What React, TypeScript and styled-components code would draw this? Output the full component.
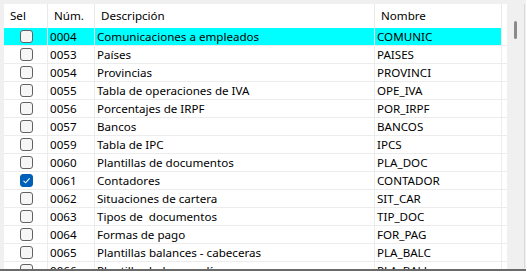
import React from "react";
import styled, { createGlobalStyle } from "styled-components";

const Global = createGlobalStyle`
  html, body { margin: 0; padding: 0; background: #ffffff; }
  body { font-family: "Noto Sans", "Segoe UI", sans-serif; }
`;

const COLS = "44px 47px 280px 127px 5px";

const Frame = styled.div`
  box-sizing: border-box;
  width: 526px;
  height: 271px;
  padding: 4px 0 0 4px;
  background: #f0f0f0;
  border-bottom: 2px solid #6a6a6a;
  display: flex;
  overflow: hidden;
`;

const Table = styled.div`
  width: 503px;
  height: 100%;
  background: #ffffff;
  display: flex;
  flex-direction: column;
  overflow: hidden;
  flex-shrink: 0;
`;

const HeaderRow = styled.div`
  display: grid;
  grid-template-columns: ${COLS};
  height: 24px;
  flex-shrink: 0;
`;

const HeaderCell = styled.div<{ $last?: boolean }>`
  box-sizing: border-box;
  border-right: ${(p) => (p.$last ? "none" : "1px solid #e9e9e9")};
  padding-left: 6px;
  font-size: 11.6px;
  line-height: 24px;
  color: #000;
  white-space: nowrap;
  overflow: hidden;
`;

const Row = styled.div<{ $highlight?: boolean }>`
  display: grid;
  grid-template-columns: ${COLS};
  height: 18px;
  flex-shrink: 0;
  box-sizing: border-box;
  border-bottom: 1px solid #ececec;
  background: ${(p) => (p.$highlight ? "#00ffff" : "#ffffff")};
`;

const Cell = styled.div<{ $center?: boolean; $last?: boolean }>`
  box-sizing: border-box;
  border-right: ${(p) => (p.$last ? "none" : "1px solid #ececec")};
  padding-left: 2px;
  font-size: 11.6px;
  line-height: 17px;
  color: #000;
  white-space: pre;
  overflow: hidden;
  display: flex;
  align-items: center;
  justify-content: ${(p) => (p.$center ? "center" : "flex-start")};
`;

const Filler = styled.div`
  background: #ffffff;
`;

const Check = styled.div<{ $checked?: boolean }>`
  box-sizing: border-box;
  width: 13px;
  height: 13px;
  border-radius: 3px;
  border: 1px solid ${(p) => (p.$checked ? "#005fb8" : "#626262")};
  background: ${(p) => (p.$checked ? "#005fb8" : "#f6f6f6")};
  display: flex;
  align-items: center;
  justify-content: center;
`;

const ScrollTrack = styled.div`
  width: 17px;
  height: 263px;
  background: #f0f0f0;
  display: flex;
  justify-content: center;
  padding-top: 17px;
  box-sizing: border-box;
  flex-shrink: 0;
`;

const Thumb = styled.div`
  width: 3px;
  height: 18px;
  border-radius: 2px;
  background: #8a8a8a;
`;

const RightEdge = styled.div`
  width: 1px;
  height: 264px;
  background: #dadada;
  flex-shrink: 0;
`;

type Item = { num: string; desc: string; name: string; checked?: boolean; hl?: boolean };

const rows: Item[] = [
  { num: "0004", desc: "Comunicaciones a empleados", name: "COMUNIC", hl: true },
  { num: "0053", desc: "Países", name: "PAISES" },
  { num: "0054", desc: "Provincias", name: "PROVINCI" },
  { num: "0055", desc: "Tabla de operaciones de IVA", name: "OPE_IVA" },
  { num: "0056", desc: "Porcentajes de IRPF", name: "POR_IRPF" },
  { num: "0057", desc: "Bancos", name: "BANCOS" },
  { num: "0059", desc: "Tabla de IPC", name: "IPCS" },
  { num: "0060", desc: "Plantillas de documentos", name: "PLA_DOC" },
  { num: "0061", desc: "Contadores", name: "CONTADOR", checked: true },
  { num: "0062", desc: "Situaciones de cartera", name: "SIT_CAR" },
  { num: "0063", desc: "Tipos de  documentos", name: "TIP_DOC" },
  { num: "0064", desc: "Formas de pago", name: "FOR_PAG" },
  { num: "0065", desc: "Plantillas balances - cabeceras", name: "PLA_BALC" },
  { num: "0066", desc: "Plantillas balances - líneas", name: "PLA_BALL" },
];

export default function App() {
  return (
    <>
      <Global />
      <Frame>
        <Table>
          <HeaderRow>
            <HeaderCell>Sel</HeaderCell>
            <HeaderCell>Núm.</HeaderCell>
            <HeaderCell>Descripción</HeaderCell>
            <HeaderCell>Nombre</HeaderCell>
            <HeaderCell $last />
          </HeaderRow>
          {rows.map((r) => (
            <Row key={r.num} $highlight={r.hl}>
              <Cell $center>
                <Check $checked={r.checked}>
                  {r.checked && (
                    <svg width="9" height="9" viewBox="0 0 9 9">
                      <path d="M1.5 4.8 L3.6 6.8 L7.6 2.3" fill="none" stroke="#fff" strokeWidth="1.1" />
                    </svg>
                  )}
                </Check>
              </Cell>
              <Cell>{r.num}</Cell>
              <Cell>{r.desc}</Cell>
              <Cell>{r.name}</Cell>
              <Filler />
            </Row>
          ))}
        </Table>
        <ScrollTrack>
          <Thumb />
        </ScrollTrack>
        <RightEdge />
      </Frame>
    </>
  );
}
